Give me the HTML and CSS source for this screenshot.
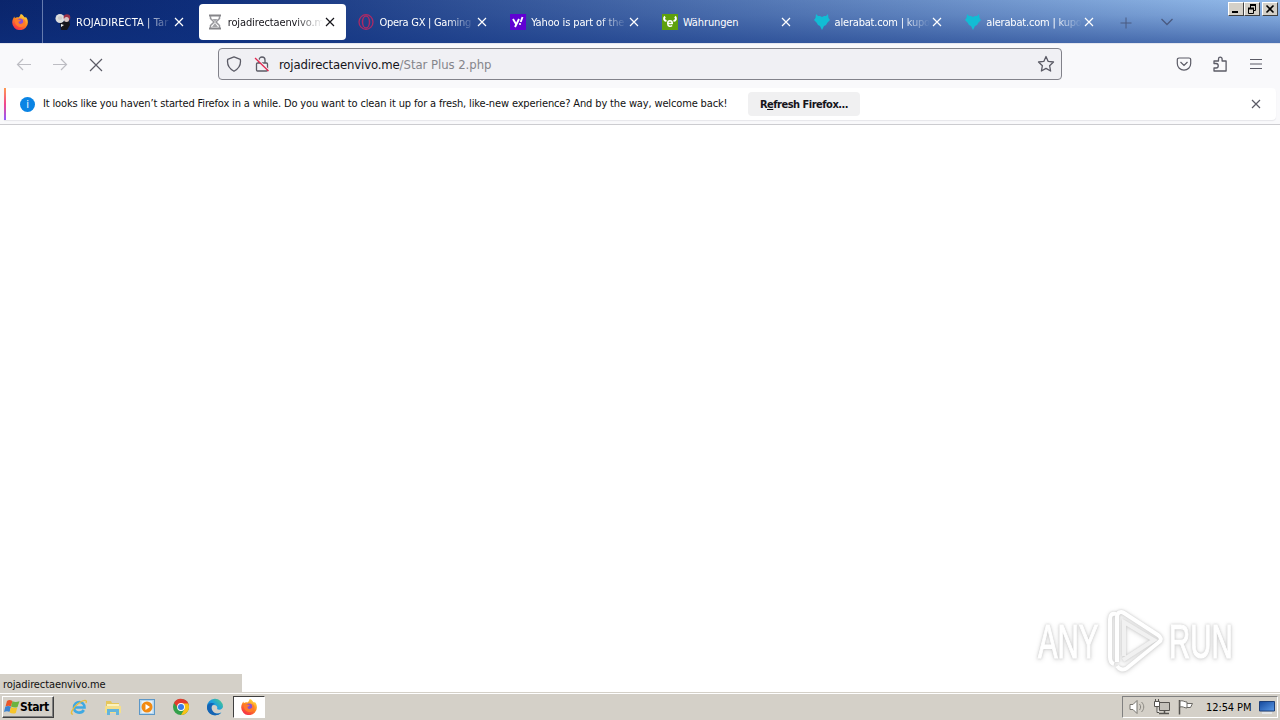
FILE: index.html
```html
<!DOCTYPE html>
<html lang="en">

<head>
    <meta charset="UTF-8">
    <title>rojadirectaenvivo.me</title>
    <link rel="stylesheet" href="styles.css">
</head>

<body>
    <!-- Shared icons -->
    <svg class="icon-defs" width="0" height="0">
        <defs>
            <linearGradient id="fire" x1="0.8" y1="0" x2="0.2" y2="1">
                <stop offset="0" stop-color="#ffe040"/>
                <stop offset="0.45" stop-color="#ff8a1c"/>
                <stop offset="1" stop-color="#f5224d"/>
            </linearGradient>
            <linearGradient id="edge" x1="0" y1="1" x2="1" y2="0">
                <stop offset="0" stop-color="#0c59a4"/>
                <stop offset="0.55" stop-color="#1b9de2"/>
                <stop offset="1" stop-color="#52d17c"/>
            </linearGradient>
            <linearGradient id="screen" x1="0" y1="0" x2="1" y2="1">
                <stop offset="0" stop-color="#14489c"/>
                <stop offset="1" stop-color="#5b9ae8"/>
            </linearGradient>
            <symbol id="close" viewBox="0 0 10 10">
                <path d="M1 1l8 8M9 1L1 9" fill="none" stroke="currentColor" stroke-width="1.2"/>
            </symbol>
            <symbol id="firefox" viewBox="0 0 16 16">
                <path d="M.2 8.500C.2 6 1.300 4 2.400 2.500l.4 1.800C4 3.300 5.200 3.200 6.200 3.500 7.500 2.800 8.200 1.600 8.500.2c1-.2 2 .3 2.600 1.300.5.900 1.400 1.500 2.200 2.200l.4-1c1.500 1.600 2.200 3.500 2.200 5.700a7.800 7.600 0 0 1-15.700.100z" fill="url(#fire)"/>
                <circle cx="8" cy="7.800" r="3.400" fill="#8a4fd0"/>
                <path d="M2.600 6.500c1.500-1.500 3-1.300 4.400-.8.700.3 1.500.2 1.900.5-.3 1-1.600 1-2.300 1.600-.4 1.600 1.200 2.700 3.300 1.800 2-1 2.300-2.800.9-5.200 3 1.500 3.300 5 1.300 7.100-3.300 3.300-9.200 1-9.500-5z" fill="#ff7a2c"/>
            </symbol>
            <symbol id="alerabat" viewBox="0 0 16 16">
                <path d="M2 0l2 2h2l2 1 2-1h2l2-2 .5 4L16 6l-2.500 2.500L12 11l-2 1-2 4-2-4-2-1-1.500-2.500L0 6l1.500-2z" fill="#12bcd4"/>
            </symbol>
        </defs>
    </svg>

    <div class="desktop">
        <header class="tab-bar">
            <div class="pinned">
                <svg width="16" height="16"><use href="#firefox"/></svg>
            </div>
            <div class="tabs">
                <div class="tab">
                    <svg class="favicon" width="16" height="16" viewBox="0 0 16 16">
                        <path d="M5 9l9-4 1 6-3 5H6z" fill="#15151c"/>
                        <circle cx="5" cy="4.500" r="4.500" fill="#ddd"/>
                        <path d="M3 3l2-1 2 1v2L5 6 3 5z" fill="#ccc"/>
                        <circle cx="12" cy="3.500" r="3.300" fill="#9c3348"/>
                        <circle cx="11.500" cy="5.500" r="2.500" fill="#d8c6c6"/>
                        <path d="M6 10l3 1-3 2z" fill="#eee"/>
                    </svg>
                    <span class="tab-title fade t-roja">ROJADIRECTA | Tar</span>
                    <svg class="tab-close" width="10" height="10"><use href="#close"/></svg>
                </div>
                <div class="tab active">
                    <svg class="favicon" width="16" height="16" viewBox="0 0 16 16">
                        <path d="M2 1.500h12M2 14.500h12" stroke="#858589" stroke-width="2"/>
                        <path d="M3.500 2v2.500L7 8l-3.500 3.500V14M12.500 2v2.500L9 8l3.500 3.500V14" fill="none" stroke="#96969a" stroke-width="1.500"/>
                        <path d="M5.500 5h5L8 7.500zM8 9l3 4H5z" fill="#a5a5a8"/>
                    </svg>
                    <span class="tab-title fade">rojadirectaenvivo.m</span>
                    <svg class="tab-close" width="10" height="10"><use href="#close"/></svg>
                </div>
                <div class="tab">
                    <svg class="favicon" width="16" height="16" viewBox="0 0 16 16">
                        <ellipse cx="8" cy="8" rx="7" ry="7.300" fill="none" stroke="#ad2a65" stroke-width="1.300"/>
                        <ellipse cx="8" cy="8" rx="3.500" ry="6" fill="none" stroke="#ad2a65" stroke-width="1.500"/>
                    </svg>
                    <span class="tab-title fade t-opera">Opera GX | Gaming</span>
                    <svg class="tab-close" width="10" height="10"><use href="#close"/></svg>
                </div>
                <div class="tab">
                    <svg class="favicon" width="16" height="16" viewBox="0 0 16 16">
                        <rect width="16" height="16" fill="#6001d2"/>
                        <path d="M3 5l3 5M9 5l-4 8M12.500 3l-1.800 5" stroke="#fff" stroke-width="1.900"/>
                        <circle cx="10" cy="10" r="1.100" fill="#fff"/>
                    </svg>
                    <span class="tab-title fade">Yahoo is part of the</span>
                    <svg class="tab-close" width="10" height="10"><use href="#close"/></svg>
                </div>
                <div class="tab">
                    <svg class="favicon" width="16" height="16" viewBox="0 0 16 16">
                        <rect width="16" height="16" fill="#5ea00d"/>
                        <path d="M3 2.500C1.300 4.500 2 6.500 4.500 7M13 2.500c1.700 2 1 4-1.500 4.500" fill="none" stroke="#fff" stroke-width="2"/>
                        <path d="M5.700 9.500h4.600c0-3.600-4.600-3.600-4.600 0 0 3.300 3 3.300 4.400 2" fill="none" stroke="#fff" stroke-width="1.500"/>
                    </svg>
                    <span class="tab-title">Währungen</span>
                    <svg class="tab-close" width="10" height="10"><use href="#close"/></svg>
                </div>
                <div class="tab">
                    <svg class="favicon" width="16" height="16"><use href="#alerabat"/></svg>
                    <span class="tab-title fade t-alera">alerabat.com | kupo</span>
                    <svg class="tab-close" width="10" height="10"><use href="#close"/></svg>
                </div>
                <div class="tab">
                    <svg class="favicon" width="16" height="16"><use href="#alerabat"/></svg>
                    <span class="tab-title fade t-alera">alerabat.com | kupo</span>
                    <svg class="tab-close" width="10" height="10"><use href="#close"/></svg>
                </div>
            </div>
            <div class="tab-tools">
                <svg width="12" height="12" viewBox="0 0 12 12"><path d="M6 .5v11M.5 6h11" stroke="currentColor"/></svg>
                <svg width="12" height="12" viewBox="0 0 12 12"><path d="M.5 2L6 7.500 11.500 2" fill="none" stroke="currentColor" stroke-width="1.300"/></svg>
            </div>
            <div class="window-controls">
                <span class="win-btn"><svg width="14" height="12"><path d="M3 9h6" stroke="#000" stroke-width="2"/></svg></span>
                <span class="win-btn"><svg width="14" height="12"><path d="M5 2h6M3 5.500h6" stroke="#000" stroke-width="2"/><path d="M5.500 2v3M10.500 2v5.500H8.500M3.500 5v5.500h5V5" fill="none" stroke="#000"/></svg></span>
                <span class="win-btn gap"><svg width="14" height="12"><path d="M3.500 2.500l7 7M10.500 2.500l-7 7" stroke="#000" stroke-width="1.600"/></svg></span>
            </div>
        </header>

        <nav class="nav-bar">
            <div class="nav-buttons">
                <svg class="disabled" width="16" height="16" viewBox="0 0 16 16"><path d="M15 7.500H1.500M7 2L1.500 7.500 7 13" fill="none" stroke="currentColor" stroke-width="1.200"/></svg>
                <svg class="disabled" width="16" height="16" viewBox="0 0 16 16"><path d="M1 7.500h13.500M9 2l5.500 5.500L9 13" fill="none" stroke="currentColor" stroke-width="1.200"/></svg>
                <svg width="16" height="16" viewBox="0 0 16 16"><path d="M2 2l12 12M14 2L2 14" stroke="currentColor" stroke-width="1.200"/></svg>
            </div>
            <div class="url-bar">
                <svg width="16" height="16" viewBox="0 0 16 16"><path d="M8 .8l6.300 2.500c.8 4.700-1.300 9.300-6.300 12C3 12.600.900 8 1.700 3.300z" fill="none" stroke="currentColor" stroke-width="1.300" stroke-linejoin="round"/></svg>
                <svg class="lock" width="16" height="16" viewBox="0 0 16 16">
                    <path d="M5 7V4a3 3 0 0 1 6 0v3M3.500 7h9a1 1 0 0 1 1 1v6a1 1 0 0 1-1 1h-9a1 1 0 0 1-1-1V8a1 1 0 0 1 1-1z" fill="none" stroke="currentColor" stroke-width="1.300"/>
                    <path d="M2.500 2.200l12.500 12" stroke="#f0f0f4" stroke-width="1.500"/>
                    <path d="M1 2l13.500 13" stroke="#e22850" stroke-width="1.300"/>
                </svg>
                <span class="url"><span class="url-host">rojadirectaenvivo.me</span><span class="url-path">/Star Plus 2.php</span></span>
                <svg class="star" width="18" height="18" viewBox="0 0 18 18"><path d="M9 1.500l2.200 4.900 5.300.6-3.900 3.700 1 5.300L9 13.400 4.400 16l1-5.300L1.500 7l5.300-.6z" fill="none" stroke="currentColor" stroke-width="1.300" stroke-linejoin="round"/></svg>
            </div>
            <div class="nav-tools">
                <svg width="16" height="16" viewBox="0 0 16 16"><path d="M3 2h10a1.700 1.700 0 0 1 1.700 1.700v3.800a6.700 6.700 0 0 1-13.400 0V3.700A1.700 1.700 0 0 1 3 2zM4.500 6L8 9.500 11.500 6" fill="none" stroke="currentColor" stroke-width="1.200"/></svg>
                <svg width="16" height="16" viewBox="0 0 16 16"><path d="M2 7.500V5h4.500V3a1.800 1.800 0 0 1 3.600 0v2h4v10H2v-3h2a2 2 0 0 0 0-4.500z" fill="none" stroke="currentColor" stroke-width="1.300" stroke-linejoin="round"/></svg>
                <svg width="16" height="16" viewBox="0 0 16 16"><path d="M2 3.500h12M2 8h12M2 12.500h12" stroke="currentColor" stroke-width="1.200"/></svg>
            </div>
        </nav>

        <div class="notice-wrap">
            <div class="notice">
                <span class="notice-icon">i</span>
                <span class="notice-text">It looks like you haven’t started Firefox in a while. Do you want to clean it up for a fresh, like-new experience? And by the way, welcome back!</span>
                <button class="refresh-btn"><span>R<u>e</u>fresh Firefox...</span></button>
                <svg class="notice-close" width="10" height="10"><use href="#close"/></svg>
            </div>
        </div>

        <main class="page">
            <div class="watermark">
                <span>ANY</span>
                <svg width="58" height="66" viewBox="0 0 58 66">
                    <path d="M11 6c-4-1-6 1-6 5v38c0 4 1 6 4 7" fill="none" stroke="#fff" stroke-width="4"/>
                    <path d="M12 54V9c0-5 4-6 7-4l34 22c3 2 4 5 1 7L22 60c-4 3-8 1-10-2" fill="none" stroke="#fff" stroke-width="4"/>
                    <path d="M19 48V14l30 18-31 20" fill="none" stroke="#f1f1f1" stroke-width="4"/>
                </svg>
                <span>RUN</span>
            </div>
            <div class="status"><span>rojadirectaenvivo.me</span></div>
        </main>

        <footer class="taskbar">
            <button class="start-btn">
                <svg width="16" height="16" viewBox="0 0 16 16">
                    <path d="M3 2c2-1.500 3.500-1 5.500 0L7 7.500c-1.500-1-3.500-1-5.500 0z" fill="#e8562a"/>
                    <path d="M8.500 2.300c2 1 4 1 7 0L13.500 8c-2 1-4.500.5-6.500-.5z" fill="#6db33f"/>
                    <path d="M1.300 7.800c2-1 3.700-1 5.700 0L5.500 13c-1.500-1-3.500-1-5.500 0z" fill="#3b83d0"/>
                    <path d="M7 8c2 1 4 1.500 6.300.5l-1.500 5.500c-2 1-4.300.5-6.300-.5z" fill="#f7c52b"/>
                </svg>
                <span>Start</span>
            </button>
            <div class="launchers">
                <span class="launcher">
                    <svg width="18" height="18" viewBox="0 0 18 18">
                        <path d="M4 9.500h10.500c0-7.500-10.500-7-10.500 0 0 6 7.500 6.500 9.800 2.500" fill="none" stroke="#3fa9e2" stroke-width="2.600"/>
                        <path d="M3 16c-4 1 0-7 6-11 5-3.500 8.500-3.500 7 0" fill="none" stroke="#e9bd3a" stroke-width="1.400"/>
                    </svg>
                </span>
                <span class="launcher">
                    <svg width="18" height="18" viewBox="0 0 18 18">
                        <path d="M2 3h5l1 2h7v10H2z" fill="#e5c65c"/>
                        <path d="M3 6h12v4H3z" fill="#fbf2bd"/>
                        <path d="M1 8h16v7H1z" fill="#f4df8b"/>
                        <path d="M3 17v-6h12v6h-3v-3H6v3z" fill="#64b5dc"/>
                    </svg>
                </span>
                <span class="launcher">
                    <svg width="18" height="18" viewBox="0 0 18 18">
                        <rect x="1.500" y="1.500" width="15" height="15" fill="#b7d7ef" stroke="#5c97c7"/>
                        <rect x="3.500" y="3" width="11" height="12" fill="#e8f1f8"/>
                        <circle cx="9" cy="9" r="5.500" fill="#f28a12"/>
                        <path d="M7.500 6l4.500 3-4.500 3z" fill="#fff"/>
                    </svg>
                </span>
                <span class="launcher">
                    <svg width="18" height="18" viewBox="0 0 18 18">
                        <circle cx="9" cy="9" r="8" fill="#34a04a"/>
                        <path d="M2 5a8 8 0 0 1 14.900 2.500L9 5.500 6 10z" fill="#e33b2e"/>
                        <path d="M9 5.500h7.200A8 8 0 0 1 9 17l3.500-6z" fill="#fbc116"/>
                        <circle cx="9" cy="9" r="3.900" fill="#fff"/>
                        <circle cx="9" cy="9" r="3" fill="#3a7ce8"/>
                    </svg>
                </span>
                <span class="launcher">
                    <svg width="18" height="18" viewBox="0 0 18 18">
                        <path d="M1 9a8 8 0 0 1 16-.5c0 3-4 4-6 2.500 1-2-.5-4-3-4-4 0-4.500 5-1 7.500 3 2 6 1.500 8.500-.5C12 20 1 17.500 1 9z" fill="url(#edge)"/>
                        <path d="M1 9c.5-4 5-5 8-3-4 0-5 6 0 9 2 1 4 .5 6 0C9 20 1 16 1 9z" fill="#1464b4"/>
                    </svg>
                </span>
                <span class="launcher running">
                    <svg width="16" height="16"><use href="#firefox"/></svg>
                </span>
            </div>
            <div class="tray">
                <svg width="18" height="16" viewBox="0 0 18 16"><path d="M1 5.500h3L8 1.500v13l-4-4H1z" fill="#fff" stroke="#77756f"/><path d="M10.500 5c1.500 2 1.500 4 0 6M12.500 3c3 3 3 7 0 10" fill="none" stroke="#8a8882"/></svg>
                <svg width="16" height="16" viewBox="0 0 16 16"><path d="M5.500 3.500h10v8h-10z" fill="#c4c1ba" stroke="#55534f"/><path d="M5 14.500h10M10.500 12v2" stroke="#55534f" stroke-width="1.500"/><path d="M.5 2.500h5v5h-5zM1.500 0v2M4.500 0v2M3 7.500v6h2" fill="#fff" stroke="#55534f"/></svg>
                <svg width="17" height="16" viewBox="0 0 17 16"><path d="M2.500 1v14.500" stroke="#55534f" stroke-width="1.500"/><path d="M3 2c3-1 4 1 7 1v6c-3 0-4-2-7-1zM10 4.500h5.500L13.500 8.500H10" fill="#fff" stroke="#6b6964"/></svg>
                <span class="clock">12:54 PM</span>
                <svg width="16" height="14" viewBox="0 0 16 14"><path d="M.5 1.500h15v9.500H.5z" fill="url(#screen)" stroke="#1d3f78"/><path d="M3 13h10" stroke="#e9edf2" stroke-width="1.500"/></svg>
            </div>
        </footer>
    </div>
</body>

</html>
```

FILE: styles.css
```css
* {
    margin: 0;
    padding: 0;
    box-sizing: border-box;
}

body {
    width: 1280px;
    height: 720px;
    overflow: hidden;
    background-color: #fff;
    color: #111;
    font-family: "DejaVu Sans Condensed", "DejaVu Sans", sans-serif;
    font-size: 11px;
}

svg {
    display: block;
    flex: none;
}

.icon-defs {
    position: absolute;
}

.desktop {
    display: flex;
    flex-direction: column;
    height: 720px;
}

/* Tabs */
.tab-bar {
    display: flex;
    height: 44px;
    background: linear-gradient(to bottom, rgba(15, 50, 130, 0.08) 0%, rgba(15, 50, 130, 0.2) 35%, rgba(15, 50, 130, 0.56) 100%), linear-gradient(to right, #0a246a, #0e2d79 15%, #a0c8f4);
    border-bottom: 1px solid #e4e6ee;
}

.pinned {
    width: 43px;
    padding: 14px 0 0 12px;
    border-right: 1px solid #657bae;
}

.tabs {
    display: flex;
    gap: 4px;
    width: 1062px;
    padding: 4px 0 3px 4px;
}

.tab {
    flex: 1;
    min-width: 0;
    display: flex;
    align-items: center;
    padding: 0 11px 0 8px;
    border-radius: 4px;
    color: #fff;
}

.tab.active {
    background-color: #fff;
    color: #15141a;
}

.favicon {
    margin-right: 5px;
}

.tab-title {
    flex: 1;
    min-width: 0;
    white-space: nowrap;
    line-height: 16px;
    padding-top: 2px;
    letter-spacing: -0.12px;
}

.tab-title.fade {
    -webkit-mask-image: linear-gradient(to left, transparent, #000 28px);
    mask-image: linear-gradient(to left, transparent, #000 28px);
}

.t-roja {
    letter-spacing: 0.1px;
}

.t-opera {
    letter-spacing: -0.27px;
}

.t-alera {
    letter-spacing: -0.2px;
}

.tab-close {
    margin-left: 2px;
}

.tab-tools {
    display: flex;
    gap: 29px;
    padding: 17px 0 0 15px;
    color: #4a5a80;
}

.window-controls {
    display: flex;
    margin: 2px 2px 0 auto;
    height: 14px;
}

.win-btn {
    width: 16px;
    height: 14px;
    background-color: #d4d0c8;
    border: 1px solid;
    border-color: #fff #404040 #404040 #fff;
    overflow: hidden;
}

.win-btn.gap {
    margin-left: 2px;
}

/* Navigation */
.nav-bar {
    display: flex;
    align-items: center;
    height: 44px;
    padding-bottom: 4px;
    background-color: #f9f9fb;
    color: #5b5b66;
}

.nav-buttons {
    display: flex;
    gap: 20px;
    width: 218px;
    padding: 1px 0 0 16px;
}

.nav-buttons .disabled {
    color: #bdbdc3;
}

.url-bar {
    display: flex;
    align-items: center;
    width: 844px;
    height: 32px;
    padding: 0 6px 0 7px;
    border: 1px solid #82828a;
    border-radius: 4px;
    background-color: #f0f0f4;
}

.lock {
    margin-left: 12px;
}

.url {
    flex: 1;
    margin-left: 9px;
    font-size: 13px;
    letter-spacing: -0.15px;
    white-space: nowrap;
}

.url-host {
    color: #15141a;
}

.url-path {
    color: #85858b;
    letter-spacing: -0.05px;
}

.nav-tools {
    display: flex;
    gap: 20px;
    margin-left: auto;
    padding-right: 16px;
}

/* Notification */
.notice-wrap {
    height: 37px;
    padding: 0 4px 4px;
    background-color: #f9f9fb;
    border-bottom: 1px solid #ccccd0;
}

.notice {
    display: flex;
    align-items: center;
    height: 32px;
    padding: 0 15px 0 14px;
    background: linear-gradient(to bottom, #ff9a50, #f2468c 50%, #9059ff) left / 2px 100% no-repeat #fff;
    border-radius: 0 4px 4px 0;
    box-shadow: 0 1px 1px #e6e6ea;
}

.notice-icon {
    width: 15px;
    height: 15px;
    margin-left: 2px;
    border-radius: 50%;
    background-color: #0a84e4;
    color: #fff;
    line-height: 15px;
    text-align: center;
}

.notice-text {
    width: 684px;
    margin-left: 8px;
    padding-bottom: 1px;
    letter-spacing: -0.146px;
    white-space: nowrap;
}

.refresh-btn {
    width: 112px;
    height: 24px;
    margin-left: 21px;
    border: none;
    border-radius: 4px;
    background-color: #f0f0f1;
    color: #15141a;
    font: bold 11px "DejaVu Sans Condensed", sans-serif;
    letter-spacing: -0.5px;
    white-space: nowrap;
}

.notice-close {
    margin-left: auto;
    color: #5b5b66;
}

/* Page area */
.page {
    flex: 1;
    display: flex;
    flex-direction: column;
    justify-content: flex-end;
}

.watermark {
    display: flex;
    align-items: center;
    align-self: flex-end;
    height: 66px;
    margin-right: 47px;
    color: #fff;
    font: 49px/66px "Liberation Sans", sans-serif;
    filter: drop-shadow(0 0 1px #ccc) drop-shadow(0 1px 2px #ddd);
}

.watermark span {
    width: 64px;
    transform: scaleX(0.6);
    transform-origin: left;
    white-space: nowrap;
    -webkit-text-stroke: 1.2px #fff;
}

.watermark svg {
    margin: 0 6px 0 3px;
}

.status {
    width: 242px;
    height: 18px;
    margin-bottom: 1px;
    padding-left: 3px;
    background-color: #d4d0c8;
    letter-spacing: -0.1px;
    line-height: 21px;
}

/* Taskbar */
.taskbar {
    display: flex;
    height: 27px;
    padding: 2px 2px 0;
    background-color: #d4d0c8;
    box-shadow: 0 -1px 0 #d4d0c8, inset 0 1px 0 #fff;
}

.start-btn {
    display: flex;
    align-items: center;
    width: 52px;
    height: 22px;
    margin-top: 1px;
    padding-left: 1px;
    background-color: #d4d0c8;
    border: 1px solid;
    border-color: #fff #404040 #404040 #fff;
    box-shadow: inset -1px -1px 0 #808080;
    color: #000;
    font: bold 12px "DejaVu Sans Condensed", sans-serif;
}

.start-btn span {
    letter-spacing: -0.4px;
}

.launchers {
    display: flex;
    gap: 2px;
    margin: 1px 0 0 9px;
}

.launcher {
    display: flex;
    align-items: center;
    justify-content: center;
    width: 32px;
    height: 22px;
}

.launcher.running {
    background-color: #fff;
    border: 1px solid;
    border-color: #404040 #fff #fff #404040;
}

.tray {
    display: flex;
    align-items: center;
    width: 156px;
    height: 22px;
    margin: 1px 0 0 auto;
    padding-left: 6px;
    border: 1px solid;
    border-color: #808080 #fff #fff #808080;
    color: #000;
}

.tray svg + svg {
    margin-left: 7px;
}

.clock {
    width: 46px;
    margin: 0 7px 0 12px;
    letter-spacing: -0.1px;
    white-space: nowrap;
}
```
